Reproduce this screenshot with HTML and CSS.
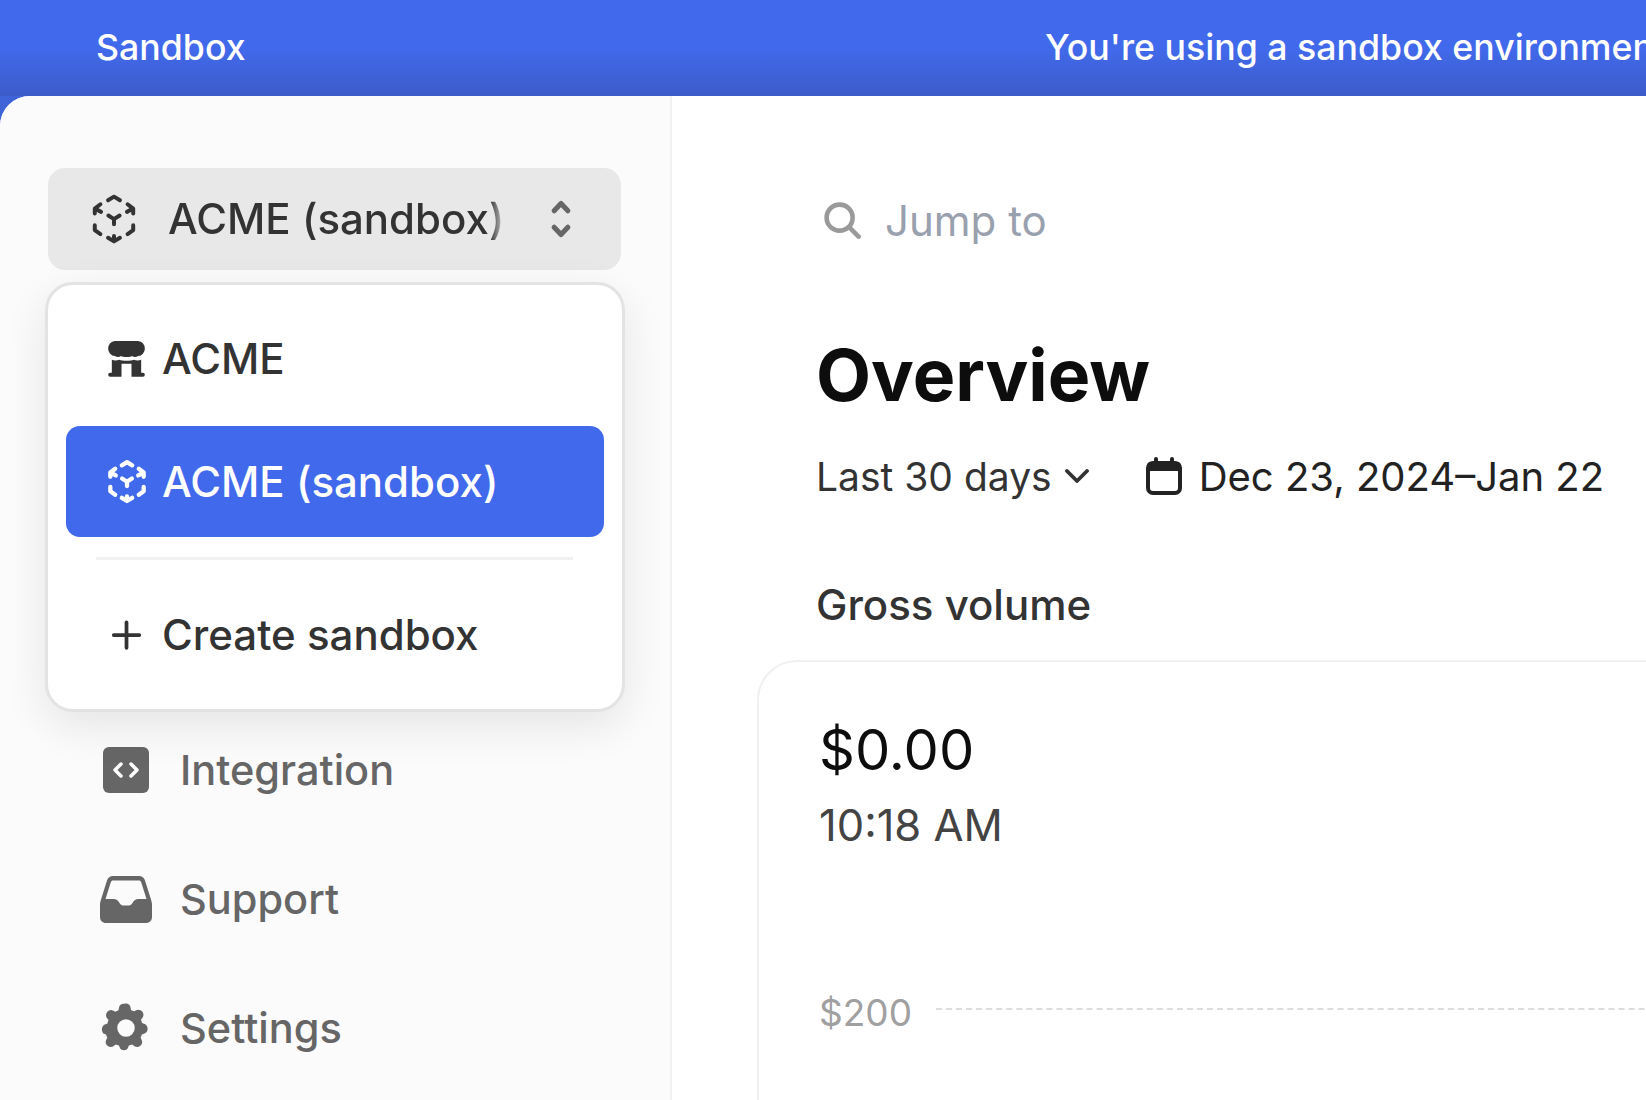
FILE: index.html
```html
<!DOCTYPE html>
<html lang="en">
<head>
<meta charset="utf-8">
<title>Overview</title>
<link rel="stylesheet" href="styles.css">
</head>
<body>
<header class="banner">
  <span class="banner-title">Sandbox</span>
  <span class="banner-msg">You're using a sandbox environment</span>
</header>
<div class="shell">
  <aside class="sidebar">
    <button class="switcher">
      <svg class="sw-icon"><use href="#cube"/></svg>
      <span class="sw-label">ACME (sandbox)</span>
      <svg class="sw-caret" viewBox="0 0 24 48" fill="none" stroke="currentColor" stroke-width="5.500" stroke-linecap="round" stroke-linejoin="round"><path d="M4.500 15 12 7l7.500 8M4.500 33l7.500 8 7.500-8"/></svg>
    </button>
    <div class="menu">
      <div class="menu-item">
        <svg class="mi-icon" viewBox="55 48 110 108" fill="currentColor"><path d="M75 48H145a21 23 0 0 1 20 23 21 22 0 0 1-20 22c-6 4-14 4-18 0-5 4-28 4-34 0-4 4-12 4-18 0a21 22 0 0 1-20-22 21 23 0 0 1 20-23Z"/><path d="M66 104C72 107 82 107 88 104 98 108 122 108 132 104 138 107 148 107 154 104V143H159a6 6 0 0 1 0 12H125V116H95V155H61a6 6 0 0 1 0-12H66Z"/></svg>
        <span>ACME</span>
      </div>
      <div class="menu-item active">
        <svg class="mi-cube"><use href="#cube"/></svg>
        <span>ACME (sandbox)</span>
      </div>
      <hr class="menu-sep">
      <div class="menu-item">
        <svg class="mi-icon" viewBox="0 0 24 24" fill="none" stroke="currentColor" stroke-width="2.500" stroke-linecap="round"><path d="M12 3.500v17M3.500 12h17"/></svg>
        <span>Create sandbox</span>
      </div>
    </div>
    <nav class="nav">
      <a class="nav-item">
        <svg class="nav-icon" viewBox="0 0 52 52"><rect x="3" y="3" width="46" height="46" rx="6" fill="currentColor"/><path d="M21 20l-6 6 6 6M31 20l6 6-6 6" fill="none" stroke="#fff" stroke-width="3.500" stroke-linecap="round" stroke-linejoin="round"/></svg>
        <span>Integration</span>
      </a>
      <a class="nav-item">
        <svg class="nav-icon" viewBox="0 0 52 52"><path fill-rule="evenodd" fill="currentColor" d="M13 3h26c3 0 5 1.700 6 4.500l6 19c.6 2 1 3.500 1 5.500v12c0 3.500-2.500 6-6 6H6c-3.500 0-6-2.500-6-6V32c0-2 .4-3.500 1-5.500l6-19C8 4.700 10 3 13 3Zm0 4.500c-1 0-1.800.5-2.200 1.700L5.500 26h8c3 0 4.500 1.500 6 4 1 1.600 2 2.500 3.500 2.500h6c1.500 0 2.500-.9 3.500-2.500 1.500-2.500 3-4 6-4h8L41.200 9.200C40.800 8 40 7.500 39 7.500Z"/></svg>
        <span>Support</span>
      </a>
      <a class="nav-item">
        <svg class="nav-icon" viewBox="0 0 23.500 25" fill="currentColor"><path fill-rule="evenodd" d="M12 .6c1.200 0 2.100.9 2.200 2l.2 1.100c.5.200 1 .4 1.500.7l1-.5c1-.6 2.200-.3 2.900.6.800.9.800 2.100.1 3l-.7.900c.2.500.4 1 .5 1.600l1 .4c1.100.4 1.700 1.400 1.700 2.500s-.7 2-1.800 2.300l-1 .3c-.1.500-.3 1-.6 1.500l.5 1c.5 1 .3 2.200-.6 2.900-.9.800-2.100.8-3 .1l-.9-.7c-.5.200-1 .4-1.600.5l-.4 1c-.4 1.100-1.300 1.300-2 1.300s-1.600-.2-2-1.300l-.4-1c-.6-.1-1.100-.3-1.600-.5l-.9.700c-.9.700-2.100.7-3-.1-.9-.7-1.100-1.900-.6-2.900l.5-1c-.3-.5-.5-1-.6-1.500l-1-.3C1.100 15.100.4 14.200.4 13.100s.6-2.100 1.700-2.500l1-.4c.1-.6.300-1.100.5-1.600l-.7-.9c-.7-.9-.7-2.100.1-3 .7-.9 1.900-1.200 2.900-.6l1 .5c.5-.3 1-.5 1.500-.7l.2-1.100c.1-1.100 1-2 2.200-2ZM12 8.200a4.200 4.200 0 1 0 0 8.400 4.200 4.200 0 0 0 0-8.400Z" transform="translate(-.25 .1)"/></svg>
        <span>Settings</span>
      </a>
    </nav>
  </aside>
  <main class="main">
    <div class="jump">
      <svg class="jump-icon" viewBox="0 0 24 24" fill="none" stroke="#9a9a9a" stroke-width="2.900" stroke-linecap="round"><circle cx="10.500" cy="10.500" r="8.200"/><path d="M16.500 16.500 22.500 22.500"/></svg>
      <span>Jump to</span>
    </div>
    <h1 class="title">Overview</h1>
    <div class="filters">
      <span class="range">Last 30 days
        <svg class="chev" viewBox="0 0 24 14" fill="none" stroke="currentColor" stroke-width="3.800" stroke-linecap="round" stroke-linejoin="round"><path d="M2 2l10 10L22 2"/></svg>
      </span>
      <span class="dates">
        <svg class="cal" viewBox="0 0 36 38" fill="none" stroke="currentColor" stroke-width="4" stroke-linecap="round"><path d="M10 2v5M26 2v5"/><rect x="2" y="6" width="32" height="30" rx="5"/><path d="M2 13V9a3 3 0 0 1 3-3h26a3 3 0 0 1 3 3v4Z" fill="currentColor" stroke-width="2"/></svg>
        Dec 23, 2024–Jan 22
      </span>
    </div>
    <h2 class="section">Gross volume</h2>
    <section class="card">
      <div class="value">$0.00</div>
      <div class="time">10:18 AM</div>
      <div class="axis">
        <span class="tick">$200</span>
        <span class="grid"></span>
      </div>
    </section>
  </main>
</div>
<svg class="defs" aria-hidden="true">
  <symbol id="cube" viewBox="30 38 144 160">
    <g class="cube-lines">
      <path d="M84 60 102 49l18 11"/>
      <path d="M44 100V85l17-13M44 85l19 10"/>
      <path d="M160 100V85l-17-13M160 85l-19 10"/>
      <path d="M44 135v15l17 12"/>
      <path d="M160 135v15l-17 12"/>
      <path d="M84 173l18 11 18-11M102 168v16"/>
      <path d="M85 106l17 11 17-11M102 117v15"/>
    </g>
  </symbol>
</svg>
</body>
</html>
```
FILE: styles.css
```css
* { box-sizing: border-box; }
html, body { margin: 0; height: 100%; }
body {
  width: 1646px;
  height: 1100px;
  overflow: hidden;
  display: flex;
  flex-direction: column;
  background: #3f63d8;
  font-family: Inter, "Liberation Sans", sans-serif;
  color: #333;
}
.defs { position: absolute; width: 0; height: 0; }
.cube-lines {
  fill: none;
  stroke: currentColor;
  stroke-width: var(--cube-stroke, 12);
  stroke-linecap: round;
  stroke-linejoin: round;
}

.banner {
  flex: 0 0 96px;
  display: flex;
  align-items: center;
  padding: 0 0 2px 96px;
  color: #fff;
  font-size: 35.7px;
  font-weight: 500;
  background: linear-gradient(#4169eb 0, #4169eb 50%, #3c5cc9 100%);
  white-space: nowrap;
  overflow: hidden;
}
.banner-title { width: 949px; flex: none; }

.shell {
  flex: 1;
  display: flex;
  min-height: 0;
  background: #fff;
  border-top-left-radius: 30px;
  overflow: hidden;
}

.sidebar {
  flex: 0 0 672px;
  display: flex;
  flex-direction: column;
  align-items: flex-start;
  background: #fbfbfb;
  border-right: 2px solid #f1f1f1;
  padding: 72px 0 0 48px;
}
.switcher {
  width: 573px;
  height: 102px;
  display: flex;
  align-items: center;
  border: 0;
  border-radius: 17px;
  background: #e8e8e8;
  padding: 0 0 0 42px;
  color: #333;
  font: inherit;
  font-size: 42px;
  font-weight: 500;
}
.sw-icon { width: 48px; height: 53px; flex: none; color: #333; }
.sw-label {
  margin: 0 0 2px 30px;
  width: 336px;
  flex: none;
  text-align: left;
  white-space: nowrap;
  -webkit-mask-image: linear-gradient(to right, #000 calc(100% - 14px), rgba(0,0,0,.25) calc(100% - 2px));
  mask-image: linear-gradient(to right, #000 calc(100% - 14px), rgba(0,0,0,.25) calc(100% - 2px));
}
.sw-caret { width: 26px; height: 44px; flex: none; margin-left: auto; margin-right: 47px; color: #666; }

.menu {
  margin: 12px 0 0 -3px;
  width: 580px;
  height: 430px;
  background: #fff;
  border: 3px solid #e3e3e3;
  border-radius: 28px;
  box-shadow: 0 14px 44px rgba(0,0,0,.09);
  padding: 18px 18px 15px;
  position: relative;
  z-index: 2;
  display: flex;
  flex-direction: column;
}
.menu-item {
  height: 111px;
  flex: none;
  display: flex;
  align-items: center;
  gap: 17px;
  padding-left: 42px;
  border-radius: 14px;
  font-size: 42px;
  font-weight: 500;
  color: #333;
  white-space: nowrap;
}
.menu-item + .menu-item { margin-top: 12px; }
.menu-item.active { background: #4169eb; color: #fff; }
.mi-icon { width: 37px; height: 36px; flex: none; }
.mi-cube { --cube-stroke: 15; width: 42px; height: 46px; flex: none; margin: 0 -2.500px; }
.menu-sep {
  width: 477px;
  height: 3px;
  border: 0;
  background: #f1f1f1;
  margin: 20px 0 19px 30px;
  flex: none;
}

.nav {
  display: flex;
  flex-direction: column;
  margin-top: -7px;
  padding-left: 52px;
}
.nav-item {
  height: 129px;
  display: flex;
  align-items: center;
  gap: 25px;
  color: #666;
  font-size: 41.500px;
  font-weight: 500;
  white-space: nowrap;
}
.nav-icon { width: 52px; height: 52px; flex: none; margin-right: 3px; }

.main {
  flex: 1;
  min-width: 0;
  padding: 0 0 0 85px;
}
.jump {
  display: flex;
  align-items: center;
  gap: 24px;
  margin: 99px 0 0 66px;
  height: 50px;
  font-size: 42px;
  color: #99a0ae;
}
.jump-icon { width: 38px; height: 38px; flex: none; }
.title {
  margin: 88px 0 0 59px;
  font-size: 71.5px;
  line-height: 84px;
  font-weight: 700;
  color: #0d0d0d;
}
.filters {
  display: flex;
  align-items: center;
  gap: 57px;
  margin: 34px 0 0 59px;
  height: 50px;
  font-size: 40px;
  white-space: nowrap;
}
.range { display: flex; align-items: center; gap: 13px; color: #333; font-size: 39px; }
.chev { width: 24px; height: 14px; }
.dates { display: flex; align-items: center; gap: 17px; color: #222; }
.cal { width: 36px; height: 38px; flex: none; }
.section {
  margin: 79px 0 0 59px;
  font-size: 42px;
  line-height: 50px;
  font-weight: 500;
  color: #333;
}
.card {
  margin: 30px 0 0 0;
  height: 500px;
  width: 1000px;
  border: 2px solid #f0f0f0;
  border-radius: 40px 0 0 0;
  padding: 55px 0 0 60px;
}
.value { font-size: 56px; line-height: 66px; color: #0d0d0d; }
.time { font-size: 43.5px; line-height: 50px; margin-top: 17px; color: #444; }
.axis { display: flex; align-items: center; gap: 24px; margin-top: 141px; }
.tick { font-size: 37px; line-height: 44px; color: #a0a0a0; }
.grid { flex: 1; border-top: 2px dashed #ddd; margin-top: -8px; }
```
